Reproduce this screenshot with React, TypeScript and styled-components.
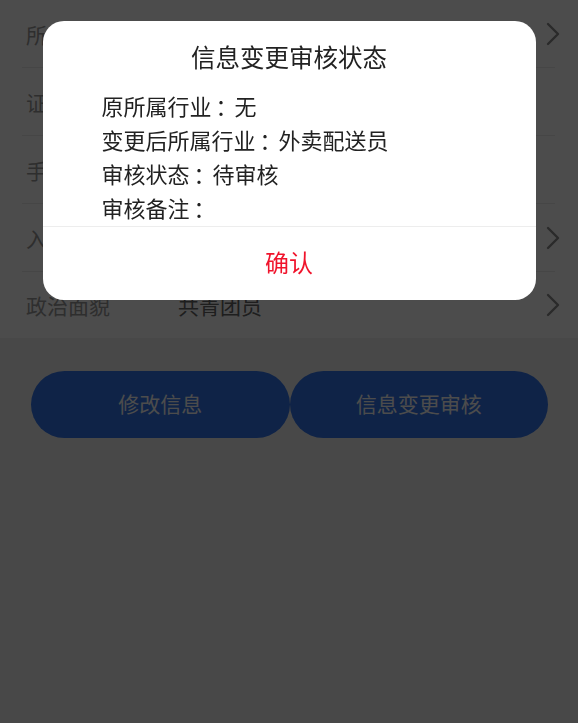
import React from "react";
import styled, { createGlobalStyle } from "styled-components";

const GlobalStyle = createGlobalStyle`
  html, body {
    margin: 0;
    padding: 0;
    background: #f2f2f2;
    font-family: "Noto Sans CJK SC", "Noto Sans", sans-serif;
  }
  * { box-sizing: border-box; }
`;

const Page = styled.div`
  min-height: 100vh;
  background: #f2f2f2;
`;

const List = styled.div`
  background: #ffffff;
`;

const Row = styled.div<{ $last?: boolean }>`
  display: flex;
  align-items: center;
  height: ${(p) => (p.$last ? "66px" : "68px")};
  margin: 0 23px 0 22px;
  padding-left: 4px;
  border-bottom: ${(p) => (p.$last ? "none" : "1px solid #ececec")};
`;

const Label = styled.span`
  width: 152px;
  flex-shrink: 0;
  font-size: 21px;
  color: #9a9a9a;
`;

const Value = styled.span`
  flex: 1;
  font-size: 21px;
  color: #666666;
`;

const Chevron = styled.svg`
  width: 14px;
  height: 24px;
  margin-right: -5px;
  flex-shrink: 0;
`;

const ButtonBar = styled.div`
  display: flex;
  padding: 0 30px 0 31px;
  margin-top: 33px;
`;

const ActionButton = styled.button`
  flex: 1;
  height: 67px;
  border: none;
  border-radius: 34px;
  background: #3275ed;
  color: #ffffff;
  font-family: inherit;
  font-size: 21px;
  padding: 0 0 3px;
`;

const Overlay = styled.div`
  position: fixed;
  inset: 0;
  background: rgba(0, 0, 0, 0.7);
  display: flex;
  justify-content: center;
  align-items: flex-start;
  padding-top: 21px;
`;

const Dialog = styled.div`
  width: 493px;
  background: #ffffff;
  border-radius: 21px;
  overflow: hidden;
`;

const Title = styled.div`
  padding-top: 22px;
  line-height: 28px;
  font-size: 24.5px;
  color: #222222;
  text-align: center;
`;

const Content = styled.div`
  padding: 17px 0 2px 59px;
`;

const Line = styled.div`
  line-height: 34px;
  font-size: 22px;
  color: #222222;
  white-space: nowrap;
`;

const Colon = styled.span`
  display: inline-block;
  width: 23px;
  padding-left: 4px;
`;

const Footer = styled.div`
  height: 74px;
  padding-bottom: 4px;
  border-top: 1px solid #ededed;
  display: flex;
  align-items: center;
  justify-content: center;
  font-size: 24px;
  color: #f0142c;
`;

const ChevronIcon = () => (
  <Chevron viewBox="0 0 14 24">
    <polyline
      points="2,2 12,12 2,22"
      fill="none"
      stroke="#8e8e8e"
      strokeWidth="2.4"
      strokeLinecap="round"
      strokeLinejoin="round"
    />
  </Chevron>
);

const rows = [
  { label: "所属行业", value: "外卖配送员", arrow: true },
  { label: "证件号码", value: "", arrow: false },
  { label: "手机号码", value: "", arrow: false },
  { label: "入团时间", value: "", arrow: true },
  { label: "政治面貌", value: "共青团员", arrow: true },
];

const details = [
  { key: "原所属行业", value: "无" },
  { key: "变更后所属行业", value: "外卖配送员" },
  { key: "审核状态", value: "待审核" },
  { key: "审核备注", value: "" },
];

export default function App() {
  return (
    <>
      <GlobalStyle />
      <Page>
        <List>
          {rows.map((r, i) => (
            <Row key={r.label} $last={i === rows.length - 1}>
              <Label>{r.label}</Label>
              <Value>{r.value}</Value>
              {r.arrow && <ChevronIcon />}
            </Row>
          ))}
        </List>
        <ButtonBar>
          <ActionButton>修改信息</ActionButton>
          <ActionButton>信息变更审核</ActionButton>
        </ButtonBar>
      </Page>
      <Overlay>
        <Dialog>
          <Title>信息变更审核状态</Title>
          <Content>
            {details.map((d) => (
              <Line key={d.key}>
                {d.key}
                <Colon>：</Colon>
                {d.value}
              </Line>
            ))}
          </Content>
          <Footer>确认</Footer>
        </Dialog>
      </Overlay>
    </>
  );
}
